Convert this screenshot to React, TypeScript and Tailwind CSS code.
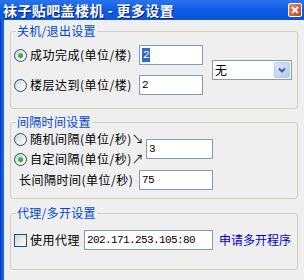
import React from 'react'

const cjk = "font-['Noto_Sans_CJK_SC',sans-serif]"
const mono = "font-['Liberation_Mono',monospace]"

const Radio = ({ checked }: { checked?: boolean }) => (
  <span className="flex h-[13px] w-[13px] shrink-0 items-center justify-center rounded-full border border-[#1c5180] bg-gradient-to-br from-[#d6d6ce] to-white">
    {checked && <span className="h-[5px] w-[5px] rounded-full bg-gradient-to-br from-[#5fd85a] to-[#1a8a1a]" />}
  </span>
)

const Field = ({ value, width, selected }: { value: string; width: string; selected?: boolean }) => (
  <div className={`flex h-[20px] shrink-0 items-center border border-[#7f9db9] bg-white pl-[2px] text-[11px] tracking-[-0.6px] text-black ${mono} ${width}`}>
    <span className={selected ? 'bg-[#316ac5] px-[1px] leading-[14px] text-white' : 'leading-[14px]'}>{value}</span>
  </div>
)

const Group = ({ title, className, children }: { title: string; className?: string; children: React.ReactNode }) => (
  <fieldset className={`rounded-[3px] border border-[#d0d0bf] ${className ?? ''}`}>
    <legend className="ml-[5px] px-[1px] text-[12px] leading-[14px] tracking-[0.3px] text-[#0046d5]">{title}</legend>
    {children}
  </fieldset>
)

export default function App() {
  return (
    <div className={`flex h-[280px] w-[304px] flex-col overflow-hidden bg-[#efefef] ${cjk}`}>
      {/* title bar */}
      <div className="flex h-[20px] shrink-0 items-center justify-between bg-gradient-to-b from-[#2a74f0] via-[#0b5ce3] to-[#0a55d9] pl-[3px] pr-[2px]">
        <span className="text-[14px] font-bold leading-none tracking-[0.4px] text-white [text-shadow:1px_1px_0_#0a1e6e]">袜子贴吧盖楼机 - 更多设置</span>
        <div className="flex h-[14px] w-[14px] items-center justify-center rounded-[2px] border border-white bg-gradient-to-br from-[#e8876a] to-[#c2401a]">
          <svg width="8" height="8" viewBox="0 0 8 8">
            <path d="M1 1L7 7M7 1L1 7" stroke="white" strokeWidth="1.8" />
          </svg>
        </div>
      </div>

      <div className="flex flex-1">
        <div className="w-[4px] shrink-0 border-l border-[#0339b8] bg-gradient-to-r from-[#0b56e0] to-[#1665ea]" />

        <div className="flex flex-1 flex-col px-[6px] pt-[4px] text-[12px] tracking-[0.5px] text-black">
          <Group title="关机/退出设置">
            <div className="flex items-center pb-[13px] pl-[3px] pt-[7px]">
              <div className="flex flex-col gap-[10px]">
                <div className="flex items-center">
                  <div className="flex w-[125px] items-center">
                    <Radio checked />
                    <span className="ml-[3px] leading-[14px]">成功完成(单位/楼)</span>
                  </div>
                  <Field value="2" width="w-[64px]" selected />
                </div>
                <div className="flex items-center">
                  <div className="flex w-[125px] items-center">
                    <Radio />
                    <span className="ml-[3px] leading-[14px]">楼层达到(单位/楼)</span>
                  </div>
                  <Field value="2" width="w-[64px]" />
                </div>
              </div>
              <div className="ml-[9px] flex h-[20px] w-[80px] items-center justify-between border border-[#7f9db9] bg-white pl-[2px] pr-[1px]">
                <span className="leading-[14px]">无</span>
                <div className="flex h-[16px] w-[16px] items-center justify-center rounded-[2px] border border-[#b6c9f5] bg-gradient-to-br from-[#dde7fd] to-[#b4c9f7]">
                  <svg width="8" height="6" viewBox="0 0 8 6">
                    <path d="M1 1.5L4 4.5L7 1.5" stroke="#4d6185" strokeWidth="2" fill="none" />
                  </svg>
                </div>
              </div>
            </div>
          </Group>

          <Group title="间隔时间设置" className="mt-[6px]">
            <div className="flex items-center pl-[3px]">
              <div className="flex w-[132px] flex-col">
                <div className="flex h-[20px] items-center">
                  <Radio />
                  <span className="ml-[3px] leading-[14px]">随机间隔(单位/秒)↘</span>
                </div>
                <div className="flex h-[20px] items-center">
                  <Radio checked />
                  <span className="ml-[3px] leading-[14px]">自定间隔(单位/秒)↗</span>
                </div>
              </div>
              <Field value="3" width="w-[67px]" />
            </div>
            <div className="mt-[1px] flex items-center pb-[8px] pl-[8px]">
              <span className="w-[120px] leading-[14px]">长间隔时间(单位/秒)</span>
              <Field value="75" width="w-[74px]" />
            </div>
          </Group>

          <Group title="代理/多开设置" className="mt-[7px]">
            <div className="flex items-center pb-[19px] pl-[3px] pt-[10px]">
              <div className="flex w-[70px] items-center">
                <span className="h-[13px] w-[13px] shrink-0 border border-[#1c5180] bg-gradient-to-br from-[#d6d6ce] to-white" />
                <span className="ml-[3px] leading-[14px]">使用代理</span>
              </div>
              <Field value="202.171.253.105:80" width="w-[129px]" />
              <span className="ml-[6px] leading-[14px] tracking-normal text-[#0000cc]">申请多开程序</span>
            </div>
          </Group>
        </div>
      </div>
    </div>
  )
}
